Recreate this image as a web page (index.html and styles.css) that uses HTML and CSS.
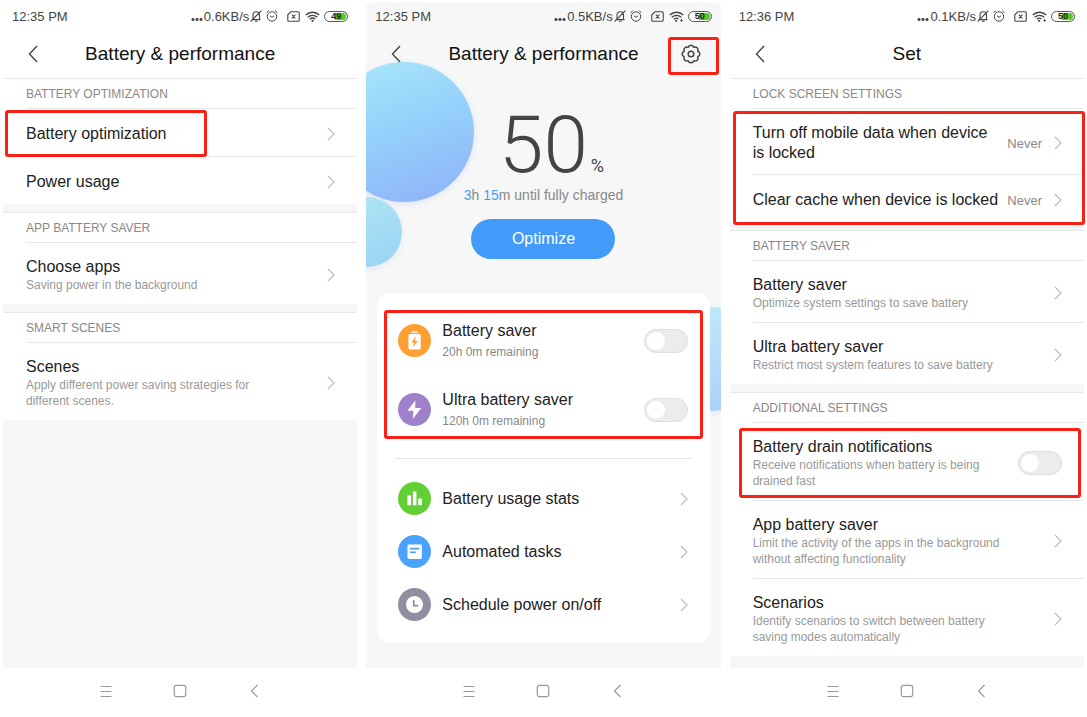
FILE: index.html
```html
<!DOCTYPE html>
<html lang="en">
<head>
    <meta charset="UTF-8">
    <meta name="viewport" content="width=device-width, initial-scale=1.0">
    <title>Battery &amp; performance</title>
    <link rel="stylesheet" href="styles.css">
</head>
<body>
    <!-- Shared icons -->
    <svg class="sprite" aria-hidden="true">
        <symbol id="i-back" viewBox="0 0 10 18"><path d="M9 1 1.5 9 9 17" fill="none" stroke="currentColor" stroke-width="1.4"/></symbol>
        <symbol id="i-next" viewBox="0 0 8 14"><path d="M1 1 7 7 1 13" fill="none" stroke="currentColor" stroke-width="1.2"/></symbol>
        <symbol id="i-bell" viewBox="0 0 12 12"><path d="M1.6 9.6h8.9M3 9.4V5.2C3 3.2 4.4 1.8 6.2 1.8s3.3 1.4 3.3 3.4v4.2M5 11.3h2.6M11.4.6.6 11.6" fill="none" stroke="currentColor" stroke-width="1.1"/></symbol>
        <symbol id="i-alarm" viewBox="0 0 12 12"><g fill="none" stroke="currentColor" stroke-width="1"><circle cx="6" cy="6.5" r="4.7"/><path d="M.6 2.6 2.8.8M11.4 2.6 9.2.8M4 5.8l2 1.5 2.1-1.5"/></g></symbol>
        <symbol id="i-nosim" viewBox="0 0 13 11"><path d="M3.8.8h7.4a1 1 0 0 1 1 1v7.4a1 1 0 0 1-1 1H1.8a1 1 0 0 1-1-1V3.8zM4.8 3.7l3.6 3.6M8.4 3.7 4.8 7.3" fill="none" stroke="currentColor" stroke-width="1.1"/></symbol>
        <symbol id="i-wifi" viewBox="0 0 15 11"><path d="M.8 4C4.6.3 10.4.3 14.2 4M2.8 6.2c2.7-2.5 6.7-2.5 9.4 0M4.9 8.2c1.5-1.3 3.7-1.3 5.2 0" fill="none" stroke="currentColor" stroke-width="1.4"/><circle cx="7.5" cy="9.8" r="1.1" fill="currentColor"/></symbol>
        <symbol id="i-wifi-link" viewBox="0 0 15 11"><path d="M.8 4C4.6.3 10.4.3 14.2 4M2.8 6.2c2.7-2.5 6.7-2.5 9.4 0M4.9 8.2c1.5-1.3 3.2-1.3 4.6-.4" fill="none" stroke="currentColor" stroke-width="1.4"/><circle cx="7.2" cy="9.8" r="1.1" fill="currentColor"/><path d="M12.5 7.8v3M11.3 9.5h2.6" stroke="currentColor" stroke-width=".9"/></symbol>
        <symbol id="i-menu" viewBox="0 0 14 14"><path d="M1.5 2.5h11M1.5 7.5h11M1.5 12.5h11" fill="none" stroke="currentColor" stroke-width="1.1"/></symbol>
        <symbol id="i-home" viewBox="0 0 14 14"><rect x="1.3" y="1.3" width="11.4" height="11.4" rx="2.2" fill="none" stroke="currentColor" stroke-width="1.2"/></symbol>
        <symbol id="i-navback" viewBox="0 0 14 14"><path d="M10.5 1 4.5 7l6 6" fill="none" stroke="currentColor" stroke-width="1.2"/></symbol>
    </svg>

    <div class="phones">
        <!-- Battery & performance -->
        <section class="phone">
            <div class="status">
                <span class="time">12:35 PM</span>
                <span class="dots"></span>
                <span>0.6KB/s</span>
                <svg class="bell"><use href="#i-bell"/></svg>
                <svg class="alarm"><use href="#i-alarm"/></svg>
                <svg class="sim"><use href="#i-nosim"/></svg>
                <svg class="wifi"><use href="#i-wifi"/></svg>
                <span class="battery">49</span>
            </div>
            <header class="header">
                <button class="icon-btn" aria-label="Back"><svg class="back"><use href="#i-back"/></svg></button>
                <h1>Battery &amp; performance</h1>
            </header>
            <main class="screen">
                <div class="group">
                    <h2>BATTERY OPTIMIZATION</h2>
                    <a class="row" href="#">
                        <span class="text"><span class="title">Battery optimization</span></span>
                        <svg class="next"><use href="#i-next"/></svg>
                        <span class="mark mark-optimization"></span>
                    </a>
                    <a class="row" href="#">
                        <span class="text"><span class="title">Power usage</span></span>
                        <svg class="next"><use href="#i-next"/></svg>
                    </a>
                </div>
                <div class="group">
                    <h2>APP BATTERY SAVER</h2>
                    <a class="row" href="#">
                        <span class="text"><span class="title">Choose apps</span><span class="desc">Saving power in the background</span></span>
                        <svg class="next"><use href="#i-next"/></svg>
                    </a>
                </div>
                <div class="group">
                    <h2>SMART SCENES</h2>
                    <a class="row" href="#">
                        <span class="text"><span class="title">Scenes</span><span class="desc">Apply different power saving strategies for different scenes.</span></span>
                        <svg class="next"><use href="#i-next"/></svg>
                    </a>
                </div>
            </main>
            <nav class="nav">
                <button aria-label="Menu"><svg><use href="#i-menu"/></svg></button>
                <button aria-label="Home"><svg><use href="#i-home"/></svg></button>
                <button aria-label="Back"><svg><use href="#i-navback"/></svg></button>
            </nav>
        </section>

        <!-- Charge overview -->
        <section class="phone">
            <div class="overview">
                <span class="bubble bubble-large"></span>
                <span class="bubble bubble-small"></span>
                <span class="bubble bubble-right"></span>
                <div class="status">
                    <span class="time">12:35 PM</span>
                    <span class="dots"></span>
                    <span>0.5KB/s</span>
                    <svg class="bell"><use href="#i-bell"/></svg>
                    <svg class="alarm"><use href="#i-alarm"/></svg>
                    <svg class="sim"><use href="#i-nosim"/></svg>
                    <svg class="wifi"><use href="#i-wifi-link"/></svg>
                    <span class="battery">50</span>
                </div>
                <header class="header">
                    <button class="icon-btn" aria-label="Back"><svg class="back"><use href="#i-back"/></svg></button>
                    <h1>Battery &amp; performance</h1>
                    <button class="icon-btn settings" aria-label="Settings">
                        <svg class="gear" viewBox="0 0 20 20" fill="none" stroke="currentColor" stroke-width="1.5" stroke-linejoin="round">
                            <path d="M12.8 3.3A2.9 2.9 0 0 1 16.7 7.2A2.9 2.9 0 0 1 16.7 12.8A2.9 2.9 0 0 1 12.8 16.7A2.9 2.9 0 0 1 7.2 16.7A2.9 2.9 0 0 1 3.3 12.8A2.9 2.9 0 0 1 3.3 7.2A2.9 2.9 0 0 1 7.2 3.3A2.9 2.9 0 0 1 12.8 3.3Z"/>
                            <circle cx="10" cy="10" r="2.8"/>
                        </svg>
                        <span class="mark mark-settings"></span>
                    </button>
                </header>
                <div class="hero">
                    <div class="level"><span class="number">50</span><span class="percent">%</span></div>
                    <p><em>3</em>h <em>15</em>m until fully charged</p>
                    <button class="optimize">Optimize</button>
                </div>
                <div class="card">
                    <div class="savers">
                        <label class="item">
                            <svg class="badge" viewBox="0 0 34 34">
                                <circle cx="17" cy="17" r="17" fill="#ff9f33"/>
                                <path d="M13.8 7.6h6.4v1.6h-6.4z" fill="#fff"/>
                                <rect x="10.8" y="10.4" width="12.6" height="16" rx="1.6" fill="#fff"/>
                                <path d="M18.4 12.8 13.6 19h2.9l-1 5 4.9-6.4h-3z" fill="#ff9f33"/>
                            </svg>
                            <span class="text"><span class="title">Battery saver</span><span class="desc">20h 0m remaining</span></span>
                            <input type="checkbox" class="switch">
                        </label>
                        <label class="item">
                            <svg class="badge" viewBox="0 0 34 34">
                                <circle cx="17" cy="17" r="17" fill="#9f80cb"/>
                                <path d="M18 7.4 9.7 18.3h6.2l-.8 8.6 9-11.5h-6.4z" fill="#fff"/>
                            </svg>
                            <span class="text"><span class="title">Ultra battery saver</span><span class="desc">120h 0m remaining</span></span>
                            <input type="checkbox" class="switch">
                        </label>
                        <span class="mark mark-savers"></span>
                    </div>
                    <hr>
                    <a class="item link" href="#">
                        <svg class="badge" viewBox="0 0 34 34">
                            <circle cx="17" cy="17" r="17" fill="#62cf35"/>
                            <path d="M9.7 14h3.7v10H9.7zM15.3 9.7H19V24h-3.7zM20.9 17h3.7v7h-3.7z" fill="#fff"/>
                        </svg>
                        <span class="text"><span class="title">Battery usage stats</span></span>
                        <svg class="next"><use href="#i-next"/></svg>
                    </a>
                    <a class="item link" href="#">
                        <svg class="badge" viewBox="0 0 34 34">
                            <circle cx="17" cy="17" r="17" fill="#4ba2fc"/>
                            <rect x="9.8" y="9.8" width="14.8" height="14.8" rx="1.4" fill="#fff"/>
                            <path d="M12.4 14h9.6M12.4 17.8h6" stroke="#4ba2fc" stroke-width="1.7"/>
                        </svg>
                        <span class="text"><span class="title">Automated tasks</span></span>
                        <svg class="next"><use href="#i-next"/></svg>
                    </a>
                    <a class="item link" href="#">
                        <svg class="badge" viewBox="0 0 34 34">
                            <circle cx="17" cy="17" r="17" fill="#908fa1"/>
                            <circle cx="17" cy="17" r="8.8" fill="#fff"/>
                            <path d="M16.2 12.4v5.8h4.6" fill="none" stroke="#908fa1" stroke-width="1.8"/>
                        </svg>
                        <span class="text"><span class="title">Schedule power on/off</span></span>
                        <svg class="next"><use href="#i-next"/></svg>
                    </a>
                </div>
            </div>
            <nav class="nav">
                <button aria-label="Menu"><svg><use href="#i-menu"/></svg></button>
                <button aria-label="Home"><svg><use href="#i-home"/></svg></button>
                <button aria-label="Back"><svg><use href="#i-navback"/></svg></button>
            </nav>
        </section>

        <!-- Settings -->
        <section class="phone">
            <div class="status">
                <span class="time">12:36 PM</span>
                <span class="dots"></span>
                <span>0.1KB/s</span>
                <svg class="bell"><use href="#i-bell"/></svg>
                <svg class="alarm"><use href="#i-alarm"/></svg>
                <svg class="sim"><use href="#i-nosim"/></svg>
                <svg class="wifi"><use href="#i-wifi-link"/></svg>
                <span class="battery">50</span>
            </div>
            <header class="header">
                <button class="icon-btn" aria-label="Back"><svg class="back"><use href="#i-back"/></svg></button>
                <h1>Set</h1>
            </header>
            <main class="screen">
                <div class="group">
                    <h2>LOCK SCREEN SETTINGS</h2>
                    <div class="rows">
                        <a class="row" href="#">
                            <span class="text"><span class="title">Turn off mobile data when device is locked</span></span>
                            <span class="value">Never</span>
                            <svg class="next"><use href="#i-next"/></svg>
                        </a>
                        <a class="row" href="#">
                            <span class="text"><span class="title">Clear cache when device is locked</span></span>
                            <span class="value">Never</span>
                            <svg class="next"><use href="#i-next"/></svg>
                        </a>
                        <span class="mark mark-lock"></span>
                    </div>
                </div>
                <div class="group">
                    <h2>BATTERY SAVER</h2>
                    <a class="row" href="#">
                        <span class="text"><span class="title">Battery saver</span><span class="desc">Optimize system settings to save battery</span></span>
                        <svg class="next"><use href="#i-next"/></svg>
                    </a>
                    <a class="row" href="#">
                        <span class="text"><span class="title">Ultra battery saver</span><span class="desc">Restrict most system features to save battery</span></span>
                        <svg class="next"><use href="#i-next"/></svg>
                    </a>
                </div>
                <div class="group">
                    <h2>ADDITIONAL SETTINGS</h2>
                    <label class="row">
                        <span class="text"><span class="title">Battery drain notifications</span><span class="desc">Receive notifications when battery is being drained fast</span></span>
                        <input type="checkbox" class="switch">
                        <span class="mark mark-drain"></span>
                    </label>
                    <a class="row" href="#">
                        <span class="text"><span class="title">App battery saver</span><span class="desc">Limit the activity of the apps in the background without affecting functionality</span></span>
                        <svg class="next"><use href="#i-next"/></svg>
                    </a>
                    <a class="row" href="#">
                        <span class="text"><span class="title">Scenarios</span><span class="desc">Identify scenarios to switch between battery saving modes automatically</span></span>
                        <svg class="next"><use href="#i-next"/></svg>
                    </a>
                </div>
            </main>
            <nav class="nav">
                <button aria-label="Menu"><svg><use href="#i-menu"/></svg></button>
                <button aria-label="Home"><svg><use href="#i-home"/></svg></button>
                <button aria-label="Back"><svg><use href="#i-navback"/></svg></button>
            </nav>
        </section>
    </div>
</body>
</html>
```
FILE: styles.css
```css
* {
    margin: 0;
    padding: 0;
    box-sizing: border-box;
}

body {
    font-family: "Liberation Sans", Arial, sans-serif;
    background: #fff;
    color: #222;
}

button {
    font: inherit;
    color: inherit;
    background: none;
    border: 0;
}

a {
    color: inherit;
    text-decoration: none;
}

.sprite {
    display: none;
}

.phones {
    display: grid;
    grid-template-columns: repeat(3, minmax(0, 1fr));
    gap: 9px;
    min-height: 100vh;
    padding: 3px 3px 0;
}

.phone {
    display: flex;
    flex-direction: column;
}

/* Status bar */
.status {
    display: flex;
    align-items: center;
    height: 26px;
    padding: 0 9px;
    font-size: 13px;
    color: #444;
    white-space: nowrap;
}

.status svg {
    flex: none;
    width: 12px;
    height: 12px;
}

.time {
    margin-right: auto;
}

.dots {
    width: 12px;
    height: 3px;
    margin: 6px 1px 0 0;
    background: radial-gradient(circle, #444 1px, transparent 2px) 0 0 / 4px 3px;
}

.bell {
    margin-left: 1px;
}

.alarm {
    margin-left: 4px;
}

.status .sim {
    width: 13px;
    height: 11px;
    margin-left: 9px;
}

.status .wifi {
    width: 15px;
    height: 11px;
    margin: 0 4px 0 5px;
}

.battery {
    width: 24px;
    height: 11px;
    border: 1px solid #555;
    border-radius: 6px;
    background: linear-gradient(90deg, #fff 45%, #55c81e 45%) padding-box;
    box-shadow: inset 0 0 0 1px #fff;
    color: #222;
    font-size: 9px;
    font-weight: bold;
    line-height: 9px;
    text-align: center;
}

/* Title bar */
.header {
    display: grid;
    grid-template-columns: 1fr auto 1fr;
    align-items: center;
    height: 50px;
    padding: 0 25px;
    border-bottom: 1px solid #e8e8e8;
}

.header h1 {
    font-size: 19px;
    font-weight: normal;
    color: #111;
}

.icon-btn {
    position: relative;
    justify-self: start;
    color: #444;
}

.icon-btn svg {
    display: block;
}

.back {
    width: 10px;
    height: 18px;
}

.settings {
    justify-self: end;
    margin-right: -5px;
}

.gear {
    width: 20px;
    height: 20px;
}

/* Settings lists */
.screen {
    flex: 1;
    background: #f6f6f6;
}

.group {
    padding-left: 23px;
    background: #fff;
}

.group + .group {
    margin-top: 8px;
    border-top: 1px solid #e8e8e8;
}

.group h2 {
    height: 30px;
    border-bottom: 1px solid #e8e8e8;
    font-size: 12px;
    font-weight: normal;
    line-height: 30px;
    color: #888;
}

.row {
    position: relative;
    display: flex;
    align-items: center;
    box-sizing: content-box;
    min-height: 22px;
    padding: 14px 22px 11px 0;
}

.row + .row {
    border-top: 1px solid #e8e8e8;
}

.rows {
    position: relative;
}

.text {
    max-width: 260px;
    margin-right: auto;
}

.title {
    display: block;
    font-size: 16px;
    line-height: 20px;
}

.desc {
    display: block;
    font-size: 12px;
    line-height: 16px;
    color: #999;
}

.value {
    margin: 0 12px 0 7px;
    font-size: 13px;
    color: #888;
}

.next {
    flex: none;
    width: 8px;
    height: 14px;
    color: #bbb;
}

.switch {
    flex: none;
    appearance: none;
    width: 44px;
    height: 24px;
    padding: 2px;
    border: 1px solid #dedede;
    border-radius: 12px;
    background: #ececec;
}

.switch::before {
    content: "";
    display: block;
    width: 18px;
    height: 18px;
    border-radius: 50%;
    background: #fff;
}

.switch:checked {
    background: #439bf9;
}

.switch:checked::before {
    margin-left: auto;
}

/* Charge overview */
.overview {
    position: relative;
    isolation: isolate;
    flex: 1;
    overflow: hidden;
    border-radius: 5px 5px 0 0;
    background: #f7f7f7;
}

.overview .header {
    border-color: transparent;
}

.bubble {
    position: absolute;
    z-index: -1;
    border-radius: 50%;
}

.bubble-large {
    top: 59px;
    left: -32px;
    width: 140px;
    height: 140px;
    background: linear-gradient(160deg, #a9e8fa, #94cffb 50%, #8fb0f8);
    box-shadow: 0 2px 6px rgba(143, 173, 248, 0.25);
}

.bubble-small {
    top: 194px;
    left: -34px;
    width: 70px;
    height: 70px;
    background: linear-gradient(160deg, #b0e6f5, #98d3f3);
    box-shadow: 0 2px 6px rgba(143, 173, 248, 0.2);
}

.bubble-right {
    top: 304px;
    right: -42px;
    width: 104px;
    height: 104px;
    background: linear-gradient(170deg, #c0eafb, #abd0f7);
    box-shadow: 0 2px 6px rgba(143, 173, 248, 0.2);
}

.hero {
    display: flex;
    flex-direction: column;
    align-items: center;
    padding: 26px 0 34px;
}

.level {
    display: grid;
    grid-template-columns: 1fr auto 1fr;
    align-items: baseline;
    width: 100%;
    height: 80px;
    font-family: Roboto, sans-serif;
    color: #444;
}

.level::before {
    content: "";
}

.number {
    font-size: 80px;
    font-weight: 300;
    line-height: 80px;
}

.percent {
    padding-left: 3px;
    font-size: 18px;
}

.hero p {
    font-size: 14px;
    line-height: 20px;
    color: #888;
}

.hero em {
    font-style: normal;
    color: #439bf9;
}

.optimize {
    width: 144px;
    height: 40px;
    margin-top: 14px;
    border-radius: 20px;
    background: #439bf9;
    color: #fff;
    font-size: 16px;
}

.card {
    margin: 0 11px;
    padding: 13px 0 12px;
    border-radius: 12px;
    background: #fff;
}

.savers {
    position: relative;
}

.item {
    display: flex;
    align-items: center;
    height: 69px;
    padding: 0 22px 0 21px;
}

.link {
    height: 53px;
}

.badge {
    flex: none;
    width: 33px;
    height: 33px;
    margin-right: 11px;
}

.item .desc {
    margin-top: 3px;
    color: #888;
}

.card hr {
    margin: 14px 18px 13px;
    border: 0;
    border-top: 1px solid #e4e4e4;
}

/* Red highlight frames */
.mark {
    position: absolute;
    border: 3px solid #fb2015;
    border-radius: 3px;
    pointer-events: none;
}

.mark-optimization {
    top: 1px;
    left: -21px;
    width: 202px;
    height: 47px;
    z-index: 1;
}

.mark-settings {
    inset: -7px -18px -11px -13px;
}

.mark-savers {
    inset: 4px 7px 5px;
}

.mark-lock {
    inset: 2px -1px -3px -20px;
}

.mark-drain {
    inset: 5px 3px 2px -14px;
}

/* Navigation bar */
.nav {
    display: flex;
    justify-content: center;
    gap: 46px;
    height: 49px;
    padding-bottom: 4px;
    color: #999;
}

.nav button {
    width: 28px;
}

.nav svg {
    width: 14px;
    height: 14px;
    vertical-align: middle;
}
```
